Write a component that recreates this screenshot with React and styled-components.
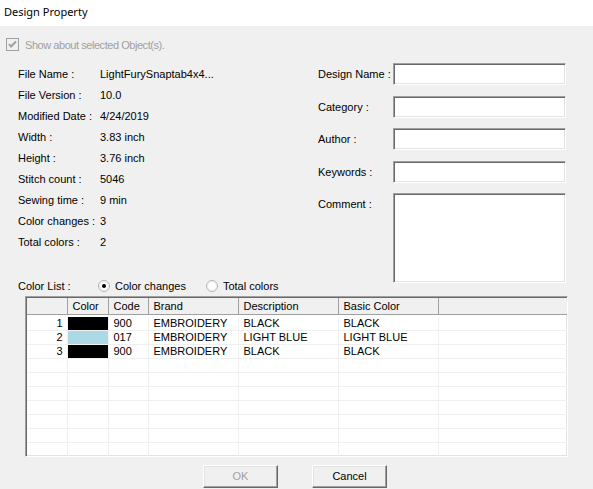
import React from "react"
import styled, { createGlobalStyle } from "styled-components"

const GlobalStyle = createGlobalStyle`
    html, body {
        margin: 0;
        padding: 0;
        background: #f0f0f0;
    }
    body {
        font-family: "Liberation Sans", Arial, sans-serif;
        font-size: 11px;
        color: #000;
    }
`

const Dialog = styled.div`
    width: 593px;
    height: 489px;
    background: #f0f0f0;
    overflow: hidden;
`

const TitleBar = styled.div`
    height: 26px;
    background: #fff;
    padding-left: 4px;
    font-family: "Noto Sans", "Open Sans", sans-serif;
    font-size: 11px;
    line-height: 23px;
`

const CheckRow = styled.div`
    display: flex;
    align-items: center;
    gap: 6px;
    margin: 12px 0 0 6px;
    height: 13px;
    color: #a0a0a0;
    letter-spacing: -0.45px;
`

const Main = styled.div`
    display: grid;
    grid-template-columns: 300px 248px;
    margin: 12px 0 0 18px;
`

const LeftCol = styled.div`
    display: flex;
    flex-direction: column;
`

const InfoGrid = styled.div`
    display: grid;
    grid-template-columns: 82px 1fr;
    grid-auto-rows: 21.1px;
    align-items: center;
`

const ColorListRow = styled.div`
    display: flex;
    align-items: center;
    height: 14px;
    margin-top: 26px;
`

const ColorListLabel = styled.span`
    width: 80px;
`

const RadioItem = styled.label`
    display: flex;
    align-items: center;
    gap: 5px;
    margin-right: ${(p) => p.gap || 0}px;
`

const FormCol = styled.div`
    display: flex;
    flex-direction: column;
    gap: 10.5px;
`

const FormRow = styled.div`
    display: flex;
    align-items: ${(p) => (p.top ? "flex-start" : "center")};
`

const FormLabel = styled.span`
    width: 75px;
    padding-top: ${(p) => (p.top ? 5 : 0)}px;
`

const Field = styled.div`
    width: 171px;
    height: ${(p) => p.h || 20}px;
    background: #fff;
    border-top: 1px solid #a0a0a0;
    border-left: 1px solid #a0a0a0;
    border-bottom: 1px solid #fff;
    border-right: 1px solid #fff;
    box-shadow: inset 1px 1px 0 #696969, inset -1px -1px 0 #e3e3e3;
`

const GridBox = styled.div`
    margin: 3px 0 0 25px;
    width: 539px;
    height: 157px;
    background: #fff;
    border-top: 1px solid #a0a0a0;
    border-left: 1px solid #a0a0a0;
    border-bottom: 1px solid #fff;
    border-right: 1px solid #fff;
    box-shadow: inset 1px 1px 0 #696969, inset -1px -1px 0 #e3e3e3;
    padding: 1px;
    overflow: hidden;
`

const Table = styled.table`
    border-collapse: collapse;
    table-layout: fixed;
    width: 540px;
`

const Th = styled.th`
    height: 16px;
    padding: 0 0 0 5px;
    font-weight: normal;
    text-align: left;
    background: #f0f0f0;
    border-right: 1px solid #a0a0a0;
    border-bottom: 1px solid #a0a0a0;
    white-space: nowrap;
    &:last-child {
        border-right: none;
    }
`

const Spacer = styled.tr`
    height: 3px;
`

const Td = styled.td`
    height: 13px;
    padding: 0 ${(p) => (p.num ? 4 : 0)}px 0 ${(p) => (p.num ? 0 : 5)}px;
    text-align: ${(p) => (p.num ? "right" : "left")};
    border-right: 1px solid #f0f0f0;
    border-bottom: 1px solid #f0f0f0;
    line-height: 13px;
    white-space: nowrap;
    overflow: hidden;
    &:last-child {
        border-right: none;
    }
`

const SwatchTd = styled.td`
    padding: 0;
    border-right: 1px solid #f0f0f0;
    border-bottom: 1px solid #f0f0f0;
    background: ${(p) => p.color || "transparent"};
`

const Buttons = styled.div`
    display: flex;
    justify-content: center;
    gap: 34px;
    margin-top: 8px;
    padding-right: 3px;
`

const Button = styled.button`
    width: 75px;
    height: 23px;
    padding: 0;
    font-family: inherit;
    font-size: 11px;
    background: #f0f0f0;
    color: ${(p) => (p.disabled ? "#a0a0a0" : "#000")};
    border-top: 1px solid #fff;
    border-left: 1px solid #fff;
    border-right: 1px solid #696969;
    border-bottom: 1px solid #696969;
    box-shadow: inset -1px -1px 0 #a0a0a0, inset 1px 1px 0 #e3e3e3;
`

const CheckIcon = () => (
    <svg width="13" height="13" viewBox="0 0 13 13">
        <rect x="0.5" y="0.5" width="12" height="12" fill="#f0f0f0" stroke="#a0a0a0" />
        <path d="M3 6 L5 8.5 L10 3.5" fill="none" stroke="#a0a0a0" strokeWidth="2" />
    </svg>
)

const RadioIcon = ({ checked }) => (
    <svg width="12" height="12" viewBox="0 0 12 12">
        <circle cx="6" cy="6" r="5.5" fill="#fff" stroke="#b4b4b4" />
        <circle cx="6" cy="6" r="4.5" fill="#fff" stroke="#e8e8e8" />
        {checked && <circle cx="6" cy="6" r="2" fill="#000" />}
    </svg>
)

const info = [
    ["File Name :", "LightFurySnaptab4x4..."],
    ["File Version :", "10.0"],
    ["Modified Date :", "4/24/2019"],
    ["Width :", "3.83 inch"],
    ["Height :", "3.76 inch"],
    ["Stitch count :", "5046"],
    ["Sewing time :", "9 min"],
    ["Color changes :", "3"],
    ["Total colors :", "2"],
]

const colors = [
    { color: "#000", code: "900", brand: "EMBROIDERY", desc: "BLACK", basic: "BLACK" },
    { color: "#add8e6", code: "017", brand: "EMBROIDERY", desc: "LIGHT BLUE", basic: "LIGHT BLUE" },
    { color: "#000", code: "900", brand: "EMBROIDERY", desc: "BLACK", basic: "BLACK" },
]

const App = () => {
    const emptyRows = []
    for (let i = 0; i < 7; i++) {
        emptyRows.push(
            <tr key={"e" + i}>
                <Td num />
                <SwatchTd />
                <Td />
                <Td />
                <Td />
                <Td />
                <Td />
            </tr>
        )
    }

    return (
        <Dialog>
            <GlobalStyle />
            <TitleBar>Design Property</TitleBar>
            <CheckRow>
                <CheckIcon />
                <span>Show about selected Object(s).</span>
            </CheckRow>
            <Main>
                <LeftCol>
                    <InfoGrid>
                        {info.map(([label, value]) => (
                            <React.Fragment key={label}>
                                <span>{label}</span>
                                <span>{value}</span>
                            </React.Fragment>
                        ))}
                    </InfoGrid>
                    <ColorListRow>
                        <ColorListLabel>Color List :</ColorListLabel>
                        <RadioItem gap={20}>
                            <RadioIcon checked />
                            Color changes
                        </RadioItem>
                        <RadioItem>
                            <RadioIcon />
                            Total colors
                        </RadioItem>
                    </ColorListRow>
                </LeftCol>
                <FormCol>
                    <FormRow>
                        <FormLabel>Design Name :</FormLabel>
                        <Field />
                    </FormRow>
                    <FormRow>
                        <FormLabel>Category :</FormLabel>
                        <Field />
                    </FormRow>
                    <FormRow>
                        <FormLabel>Author :</FormLabel>
                        <Field />
                    </FormRow>
                    <FormRow>
                        <FormLabel>Keywords :</FormLabel>
                        <Field />
                    </FormRow>
                    <FormRow top>
                        <FormLabel top>Comment :</FormLabel>
                        <Field h={88} />
                    </FormRow>
                </FormCol>
            </Main>
            <GridBox>
                <Table>
                    <colgroup>
                        <col style={{ width: 40 }} />
                        <col style={{ width: 41 }} />
                        <col style={{ width: 40 }} />
                        <col style={{ width: 90 }} />
                        <col style={{ width: 100 }} />
                        <col style={{ width: 100 }} />
                        <col />
                    </colgroup>
                    <thead>
                        <tr>
                            <Th />
                            <Th>Color</Th>
                            <Th>Code</Th>
                            <Th>Brand</Th>
                            <Th>Description</Th>
                            <Th>Basic Color</Th>
                            <Th />
                        </tr>
                    </thead>
                    <tbody>
                        <Spacer />
                        {colors.map((c, i) => (
                            <tr key={i}>
                                <Td num>{i + 1}</Td>
                                <SwatchTd color={c.color} />
                                <Td>{c.code}</Td>
                                <Td>{c.brand}</Td>
                                <Td>{c.desc}</Td>
                                <Td>{c.basic}</Td>
                                <Td />
                            </tr>
                        ))}
                        {emptyRows}
                    </tbody>
                </Table>
            </GridBox>
            <Buttons>
                <Button disabled>OK</Button>
                <Button>Cancel</Button>
            </Buttons>
        </Dialog>
    )
}

export default App
